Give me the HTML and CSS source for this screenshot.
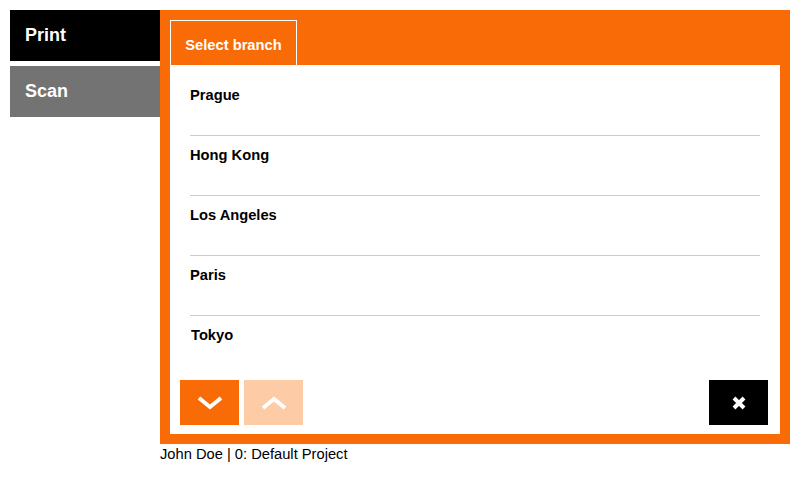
FILE: index.html
```html
<!DOCTYPE html>
<html>
<head>
<meta charset="utf-8">
<link rel="stylesheet" href="styles.css">
</head>
<body>
<div class="app">
  <nav class="side">
    <div class="side-item active">Print</div>
    <div class="side-item">Scan</div>
  </nav>
  <main class="main">
    <section class="panel">
      <div class="tabs">
        <div class="tab">Select branch</div>
      </div>
      <div class="content">
        <ul class="list">
          <li class="row">Prague</li>
          <li class="row">Hong Kong</li>
          <li class="row">Los Angeles</li>
          <li class="row">Paris</li>
          <li class="row last">Tokyo</li>
        </ul>
        <div class="actions">
          <button class="btn btn-orange" aria-label="Down">
            <svg width="26" height="14" viewBox="0 0 26 14"><path d="M2 2 L13 11 L24 2" fill="none" stroke="#fff" stroke-width="4"/></svg>
          </button>
          <button class="btn btn-light" aria-label="Up">
            <svg width="26" height="14" viewBox="0 0 26 14"><path d="M2 12 L13 3 L24 12" fill="none" stroke="#fff" stroke-width="4"/></svg>
          </button>
          <span class="spacer"></span>
          <button class="btn btn-black" aria-label="Close">
            <svg width="16" height="16" viewBox="0 0 16 16"><path d="M3 3 L13 13 M13 3 L3 13" fill="none" stroke="#fff" stroke-width="4"/></svg>
          </button>
        </div>
      </div>
    </section>
    <div class="footer">John Doe | 0: Default Project</div>
  </main>
</div>
</body>
</html>
```

FILE: styles.css
```css
* { box-sizing: border-box; }
html, body { margin: 0; padding: 0; background: #fff; }
body { font-family: "Liberation Sans", Arial, sans-serif; color: #000; }

.app {
  display: flex;
  padding: 10px 10px 0 10px;
  width: 800px;
}

.side {
  width: 150px;
  flex: none;
  display: flex;
  flex-direction: column;
  gap: 5px;
}
.side-item {
  height: 51px;
  background: #737373;
  color: #fff;
  font-weight: bold;
  font-size: 18px;
  line-height: 20px;
  padding: 15px 15px 0;
}
.side-item.active { background: #000; }

.main {
  width: 630px;
  flex: none;
}

.panel {
  background: #f96b06;
  padding: 10px;
  height: 434px;
  display: flex;
  flex-direction: column;
}

.tabs { display: flex; height: 45px; flex: none; }
.tab {
  width: 127px;
  height: 45px;
  border: 1px solid #fff;
  border-bottom: none;
  color: #fff;
  font-weight: bold;
  font-size: 14.7px;
  line-height: 16px;
  text-align: center;
  padding-top: 16px;
}

.content {
  background: #fff;
  flex: 1;
  display: flex;
  flex-direction: column;
}

.list {
  list-style: none;
  margin: 0;
  padding: 11px 20px 0;
}
.row {
  height: 60px;
  border-bottom: 1px solid #cccccc;
  font-weight: bold;
  font-size: 14.7px;
  line-height: 16px;
  padding-top: 11px;
}
.row.last { border-bottom: none; padding-left: 1px; }

.actions {
  display: flex;
  align-items: center;
  padding: 4px 12px 0 10px;
  gap: 5px;
}
.spacer { flex: 1; }
.btn {
  width: 59px;
  height: 45px;
  border: none;
  padding: 0;
  margin: 0;
  display: flex;
  align-items: center;
  justify-content: center;
}
.btn-orange { background: #f96b06; }
.btn-light { background: #fdcba6; }
.btn-black { background: #000; }

.footer {
  font-size: 14.7px;
  line-height: 16px;
  margin-top: 2px;
  color: #000;
}
```
